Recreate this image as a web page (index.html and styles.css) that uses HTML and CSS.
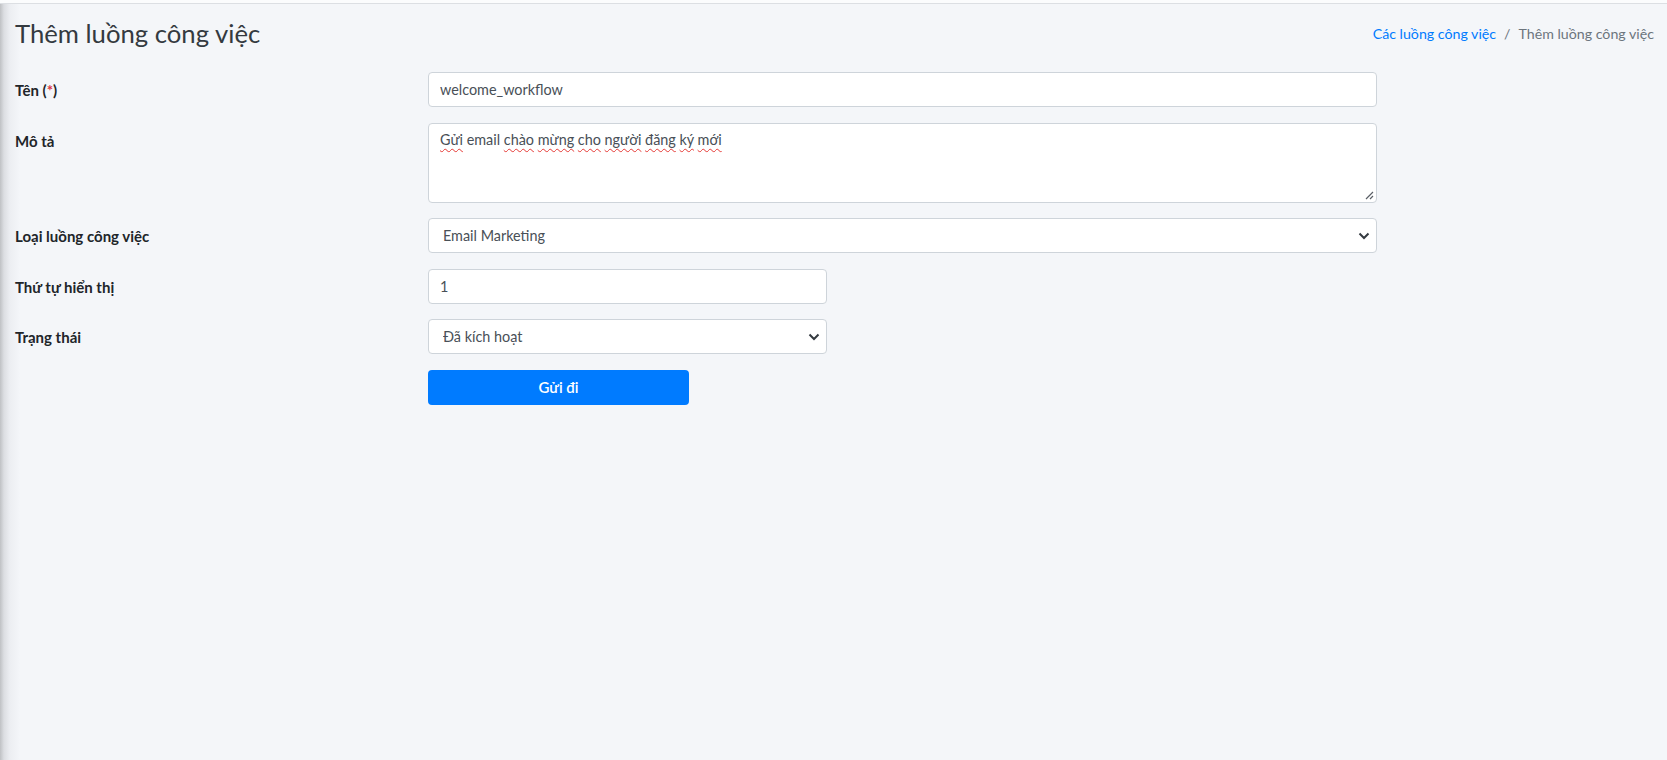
FILE: index.html
```html
<!DOCTYPE html>
<html lang="vi">
<head>
    <meta charset="UTF-8">
    <meta name="viewport" content="width=device-width, initial-scale=1.0">
    <title>Thêm luồng công việc</title>
    <link rel="stylesheet" href="styles.css">
</head>
<body>
    <div class="wrapper">
        <div class="topbar"></div>
        <div class="content-header">
            <h1>Thêm luồng công việc</h1>
            <ol class="breadcrumb">
                <li><a href="#">Các luồng công việc</a></li>
                <li class="sep">/</li>
                <li class="active">Thêm luồng công việc</li>
            </ol>
        </div>

        <form class="workflow-form">
            <label class="form-label" for="name">Tên (<span class="req">*</span>)</label>
            <div class="field">
                <input class="form-control" type="text" id="name" value="welcome_workflow">
            </div>

            <label class="form-label">Mô tả</label>
            <div class="field">
                <div class="form-control textarea">
                    <span class="typo">Gửi</span> email <span class="typo">chào</span> <span class="typo">mừng</span> <span class="typo">cho</span> <span class="typo">người</span> <span class="typo">đăng</span> <span class="typo">ký</span> <span class="typo">mới</span>
                    <svg class="grip" width="9" height="9" viewBox="0 0 9 9">
                        <path d="M8 1L1 8M8 5L5 8" stroke="#5a5f66" stroke-width="1.2" fill="none"/>
                    </svg>
                </div>
            </div>

            <label class="form-label" for="type">Loại luồng công việc</label>
            <div class="field">
                <div class="select-wrap">
                    <select class="form-control" id="type">
                        <option>Email Marketing</option>
                    </select>
                    <svg class="caret" width="12" height="8" viewBox="0 0 12 8">
                        <path d="M1.5 1.5L6 6L10.5 1.5" stroke="#343a40" stroke-width="2" fill="none"/>
                    </svg>
                </div>
            </div>

            <label class="form-label" for="order">Thứ tự hiển thị</label>
            <div class="field">
                <input class="form-control short" type="text" id="order" value="1">
            </div>

            <label class="form-label" for="status">Trạng thái</label>
            <div class="field">
                <div class="select-wrap short">
                    <select class="form-control" id="status">
                        <option>Đã kích hoạt</option>
                    </select>
                    <svg class="caret" width="12" height="8" viewBox="0 0 12 8">
                        <path d="M1.5 1.5L6 6L10.5 1.5" stroke="#343a40" stroke-width="2" fill="none"/>
                    </svg>
                </div>
            </div>

            <div></div>
            <div class="field">
                <button type="submit" class="btn-submit">Gửi đi</button>
            </div>
        </form>
    </div>
</body>
</html>
```

FILE: styles.css
```css
html, body {
    margin: 0;
    height: 100%;
}
body {
    font-family: Lato, "Noto Sans", sans-serif;
    color: #212529;
    background: #f4f6f9;
}
.wrapper {
    min-height: 100%;
    background: linear-gradient(to right, #bfc1c4 0, #dcdee2 4px, #eceef2 10px, #f4f6f9 20px);
}
.topbar {
    height: 3px;
    background: #fbfcfd;
    border-bottom: 1px solid #dcdfe3;
}
.content-header {
    display: flex;
    justify-content: space-between;
    align-items: center;
    padding: 7px 13px 0 15px;
    height: 44px;
}
.content-header h1 {
    margin: 0;
    font-size: 25.7px;
    font-weight: 400;
    color: #343a40;
}
.breadcrumb {
    display: flex;
    list-style: none;
    margin: 0;
    padding: 0;
    font-size: 14.2px;
    gap: 8px;
}
.breadcrumb a {
    color: #007bff;
    text-decoration: none;
}
.breadcrumb .sep, .breadcrumb .active {
    color: #6c757d;
}
.workflow-form {
    display: grid;
    grid-template-columns: 413px 949px;
    row-gap: 15.5px;
    padding: 17px 0 0 15px;
}
.form-label {
    font-weight: 700;
    font-size: 15px;
    padding-top: 9px;
}
.req {
    color: #dc3545;
}
.form-control {
    box-sizing: border-box;
    width: 100%;
    height: 35px;
    padding: 6px 11px;
    font-family: inherit;
    font-size: 14.4px;
    color: #495057;
    background: #fff;
    border: 1px solid #ced4da;
    border-radius: 4px;
    display: block;
}
.form-control.short, .select-wrap.short {
    width: 399px;
}
.textarea {
    position: relative;
    height: 80px;
    padding-top: 7px;
}
.typo {
    text-decoration: underline wavy #e53935;
    text-decoration-thickness: 1px;
    text-underline-offset: 3px;
}
.grip {
    position: absolute;
    right: 2px;
    bottom: 2px;
}
.select-wrap {
    position: relative;
}
.select-wrap select {
    appearance: none;
    -webkit-appearance: none;
    padding-left: 14px;
}
.caret {
    position: absolute;
    right: 7px;
    top: 14px;
    pointer-events: none;
}
.btn-submit {
    width: 261px;
    height: 35px;
    border: none;
    border-radius: 4px;
    background: #007bff;
    color: #fff;
    font-family: inherit;
    font-size: 15px;
    font-weight: 600;
    cursor: pointer;
}
```
